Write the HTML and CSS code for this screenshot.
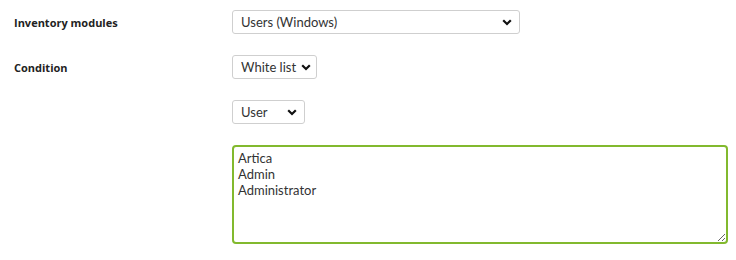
FILE: index.html
```html
<!DOCTYPE html>
<html lang="en">
<head>
  <meta charset="UTF-8">
  <meta name="viewport" content="width=device-width, initial-scale=1.0">
  <title>Inventory condition</title>
  <link rel="stylesheet" href="styles.css">
</head>
<body>
  <div class="form-grid">
    <label class="field-label" for="module">Inventory modules</label>
    <div class="field">
      <select id="module" class="select wide">
        <option>Users (Windows)</option>
      </select>
    </div>

    <label class="field-label" for="condition">Condition</label>
    <div class="field">
      <select id="condition" class="select">
        <option>White list</option>
      </select>
    </div>

    <span></span>
    <div class="field">
      <select class="select short">
        <option>User</option>
      </select>
    </div>

    <span></span>
    <div class="field">
      <textarea id="values" class="values">Artica
Admin
Administrator
</textarea>
    </div>
  </div>

  <script>
    const values = document.getElementById("values");
    values.focus();
    values.setSelectionRange(values.value.length, values.value.length);
  </script>
</body>
</html>
```

FILE: styles.css
```css
* {
  margin: 0;
  padding: 0;
  box-sizing: border-box;
}

body {
  background: #fff;
  font-family: "Lato", sans-serif;
  color: #333;
}

.form-grid {
  display: grid;
  grid-template-columns: 218px 1fr;
  row-gap: 21px;
  padding: 10px 0 0 14px;
  align-items: center;
}

.field-label {
  font-family: "Open Sans", sans-serif;
  font-weight: 700;
  font-size: 11px;
  color: #222;
}

.field {
  display: flex;
}

.select {
  appearance: none;
  -webkit-appearance: none;
  height: 24px;
  padding: 0 19px 0 8px;
  font-family: "Lato", sans-serif;
  font-size: 13px;
  color: #333;
  background: #fff url("data:image/svg+xml,%3Csvg xmlns='http://www.w3.org/2000/svg' width='10' height='7' viewBox='0 0 10 7'%3E%3Cpath d='M1.2 1.2 5 5 8.8 1.2' fill='none' stroke='%23111' stroke-width='2.2'/%3E%3C/svg%3E") no-repeat right 5px center;
  border: 1px solid #cfcfcf;
  border-radius: 3px;
  outline: none;
}

.select.wide {
  width: 288px;
  background-position: right 7px center;
}

.select.short {
  width: 73px;
  background-position: right 7px center;
}

.values {
  width: 496px;
  height: 99px;
  padding: 3px 4px;
  font-family: "Lato", sans-serif;
  font-size: 13px;
  line-height: 16px;
  color: #333;
  border: 2px solid #82b92e;
  border-radius: 4px;
  outline: none;
  caret-color: #000;
}
```
